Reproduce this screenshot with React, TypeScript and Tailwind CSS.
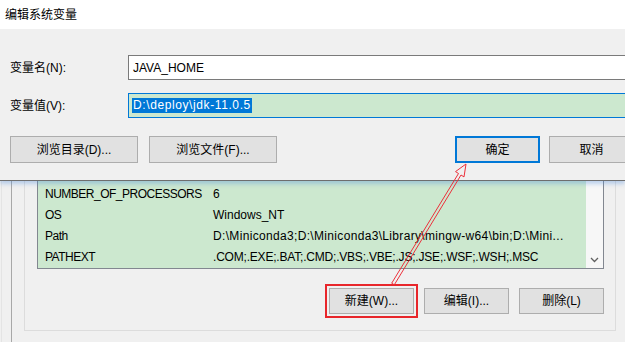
import React from "react";

const font = { fontFamily: '"Liberation Sans","Noto Sans CJK SC",sans-serif' };

function Btn({ children, className = "" }: { children: React.ReactNode; className?: string }) {
  return (
    <div
      className={
        "flex items-center justify-center shrink-0 bg-[#e1e1e1] border border-[#adadad] text-[12px] text-black " +
        className
      }
    >
      {children}
    </div>
  );
}

const rows = [
  { k: "NUMBER_OF_PROCESSORS", v: "6", t: "" },
  { k: "OS", v: "Windows_NT", t: "" },
  { k: "Path", v: "D:\\Miniconda3;D:\\Miniconda3\\Library\\mingw-w64\\bin;D:\\Mini...", t: "tracking-[0.33px]" },
  { k: "PATHEXT", v: ".COM;.EXE;.BAT;.CMD;.VBS;.VBE;.JS;.JSE;.WSF;.WSH;.MSC", t: "tracking-[-0.2px]" },
];

export default function App() {
  return (
    <div className="relative w-[625px] h-[342px] overflow-hidden bg-[#f0f0f0]" style={font}>
      {/* Top dialog */}
      <div className="relative z-10 shadow-[0_3px_4px_rgba(80,140,220,0.35)]">
        <div className="h-[29px] bg-white flex items-center pl-[5px] text-[12px] text-black">编辑系统变量</div>
        <div className="h-[152px] bg-[#f0f0f0] border-b border-[#6e6e6e] pt-[26px]">
          <div className="flex items-center h-[25px]">
            <div className="w-[128px] shrink-0 pl-[10px] text-[12px] text-black">变量名(N):</div>
            <div className="w-[520px] shrink-0 h-[25px] bg-white border border-[#7a7a7a] flex items-center pl-[4px] text-[12px] text-black">
              JAVA_HOME
            </div>
          </div>
          <div className="flex items-center h-[25px] mt-[13px]">
            <div className="w-[128px] shrink-0 pl-[10px] text-[12px] text-black">变量值(V):</div>
            <div className="w-[520px] shrink-0 h-[25px] bg-[#cce8cf] border border-[#0078d7] flex items-center pl-[3px] text-[12px]">
              <span className="bg-[#0078d7] text-white h-[15px] leading-[15px] pl-[1px] pr-[1px] tracking-[0.6px]">
                D:\deploy\jdk-11.0.5
              </span>
            </div>
          </div>
          <div className="flex items-center mt-[18px] pl-[10px]">
            <Btn className="w-[128px] h-[27px]">浏览目录(D)...</Btn>
            <Btn className="w-[128px] h-[27px] ml-[11px]">浏览文件(F)...</Btn>
            <div className="w-[85px] h-[27px] shrink-0 ml-[178px] flex items-center justify-center bg-[#e1e1e1] border-2 border-[#0078d7] text-[12px] text-black">
              确定
            </div>
            <Btn className="w-[85px] h-[27px] ml-[9px]">取消</Btn>
          </div>
        </div>
      </div>

      {/* Lower window */}
      <div className="flex h-[161px]">
        <div className="w-[10px] shrink-0 border-l border-[#e4e4e4] ml-[1px]" />
        <div className="flex-1 border-l border-[#a8a8a8] pl-[12px]">
          <div className="w-[592px] h-[150px] border-l border-r border-b border-[#dcdcdc] pl-[12px] pr-[11px]">
            <div className="relative h-[88px] bg-[#cce8cf] border-l border-r border-b border-[#828790] pt-[2px] pl-[7px] text-[12px] text-black">
              {rows.map((r) => (
                <div key={r.k} className="flex items-center h-[21px] whitespace-nowrap">
                  <div className="w-[168px] shrink-0 tracking-[-0.5px]">{r.k}</div>
                  <div className={r.t}>{r.v}</div>
                </div>
              ))}
              <div className="absolute right-0 top-0 bottom-0 w-[17px] bg-[#f7f7f7] flex items-end justify-center pb-[5px]">
                <svg width="9" height="6" viewBox="0 0 9 6">
                  <path d="M1 1 L4.5 4.5 L8 1" fill="none" stroke="#606060" strokeWidth="1.3" />
                </svg>
              </div>
            </div>
            <div className="flex justify-end gap-[10px] mt-[19px]">
              <Btn className="w-[85px] h-[26px] outline-2 outline-[#e8262b] outline-offset-[2px]">新建(W)...</Btn>
              <Btn className="w-[85px] h-[26px]">编辑(I)...</Btn>
              <Btn className="w-[85px] h-[26px]">删除(L)</Btn>
            </div>
          </div>
        </div>
      </div>

      {/* Annotation arrow */}
      <svg className="absolute left-0 top-0 z-20 pointer-events-none" width="625" height="342">
        <polygon
          points="391.7,283.2 458.5,173.5 455.5,171.6 466,164 464,176.9 461,175 394.3,284.8"
          fill="none"
          stroke="#ec2f3a"
          strokeWidth="1"
        />
      </svg>
    </div>
  );
}
